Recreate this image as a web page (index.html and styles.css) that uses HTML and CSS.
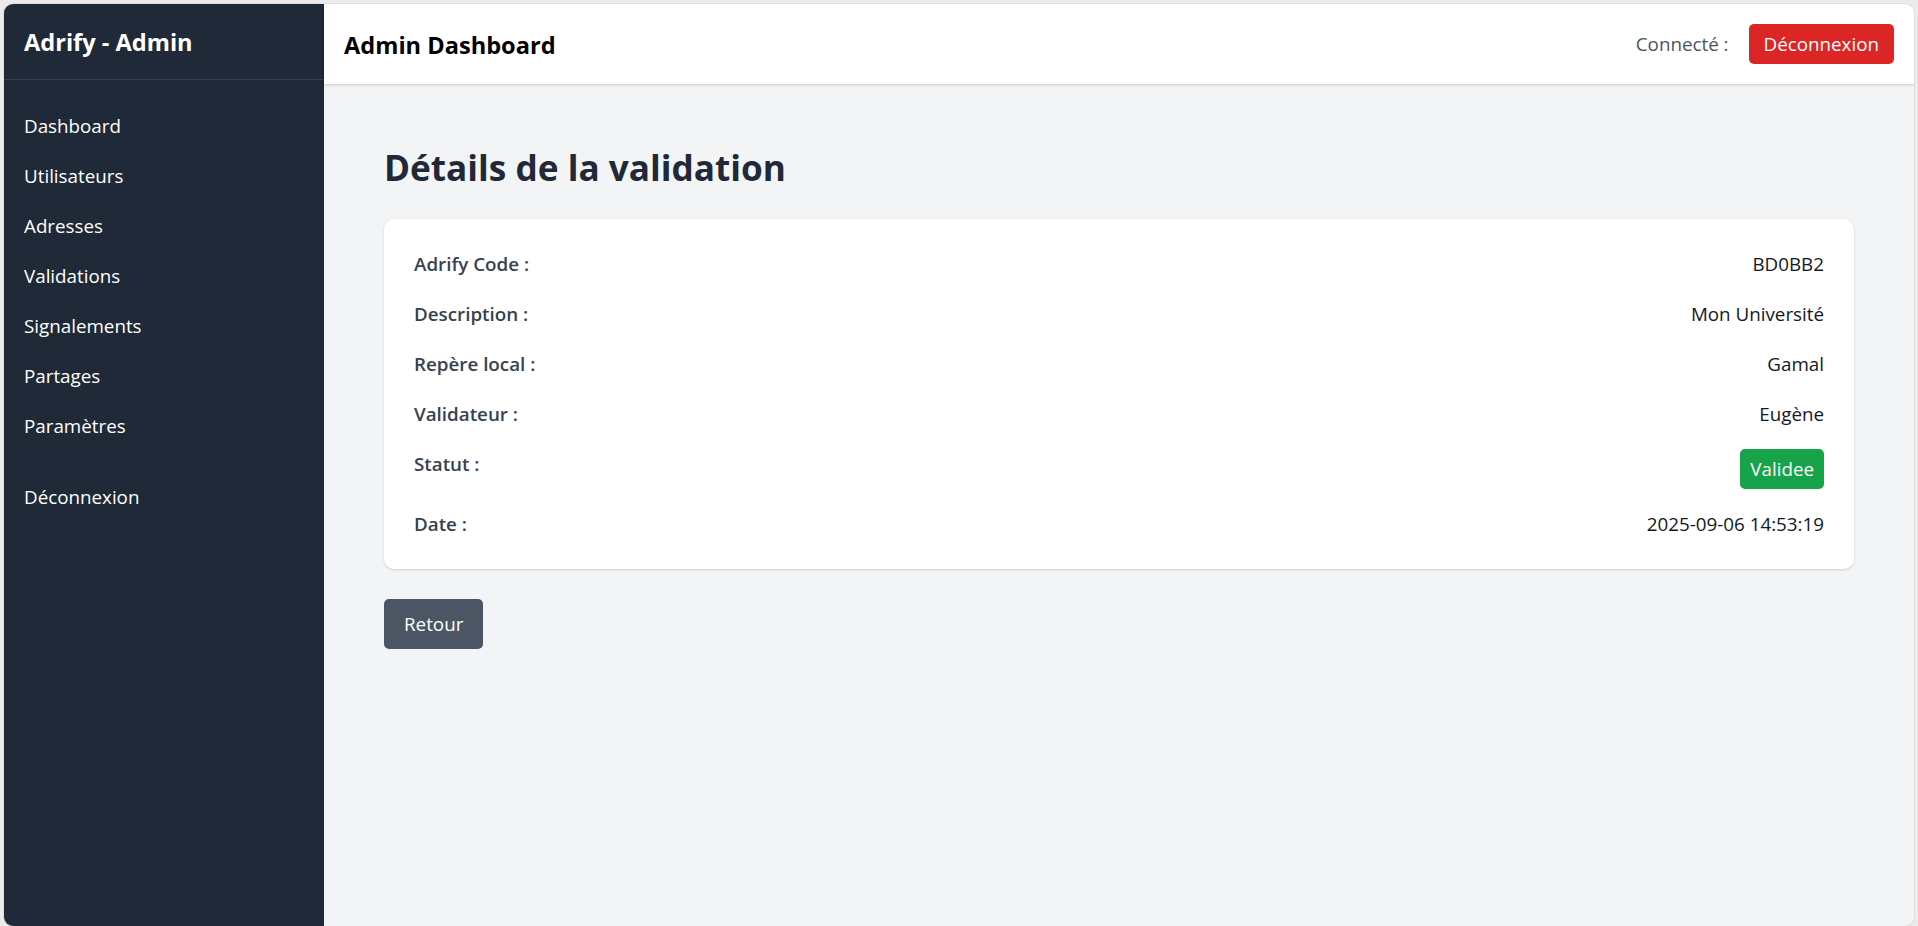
FILE: index.html
```html
<!DOCTYPE html>
<html lang="fr">
<head>
<meta charset="utf-8">
<title>Adrify - Admin</title>
<link rel="stylesheet" href="styles.css">
</head>
<body>
<div class="window">
  <aside class="sidebar">
    <div class="brand">Adrify - Admin</div>
    <nav class="nav">
      <a href="#">Dashboard</a>
      <a href="#">Utilisateurs</a>
      <a href="#">Adresses</a>
      <a href="#">Validations</a>
      <a href="#">Signalements</a>
      <a href="#">Partages</a>
      <a href="#">Paramètres</a>
      <a href="#" class="nav-logout">Déconnexion</a>
    </nav>
  </aside>
  <div class="main-col">
    <header class="topbar">
      <h1 class="topbar-title">Admin Dashboard</h1>
      <div class="user">
        <span class="user-label">Connecté :</span>
        <button class="btn-logout" type="button">Déconnexion</button>
      </div>
    </header>
    <main class="content">
      <h2 class="page-title">Détails de la validation</h2>
      <div class="card">
        <div class="row"><span class="label">Adrify Code :</span><span class="value">BD0BB2</span></div>
        <div class="row"><span class="label">Description :</span><span class="value">Mon Université</span></div>
        <div class="row"><span class="label">Repère local :</span><span class="value">Gamal</span></div>
        <div class="row"><span class="label">Validateur :</span><span class="value">Eugène</span></div>
        <div class="row"><span class="label">Statut :</span><span class="badge">Validee</span></div>
        <div class="row"><span class="label">Date :</span><span class="value">2025-09-06 14:53:19</span></div>
      </div>
      <a href="#" class="btn-back">Retour</a>
    </main>
  </div>
</div>
</body>
</html>
```

FILE: styles.css
```css
* { box-sizing: border-box; }
html, body { margin: 0; }
body {
  height: 926px;
  overflow: hidden;
  padding: 4px 4px 0 4px;
  background: #ececec;
  font-family: "Open Sans", "Noto Sans", "Liberation Sans", sans-serif;
  font-size: 18.8px;
  line-height: 30px;
}
.window {
  display: flex;
  height: 922px;
  border-radius: 9px;
  overflow: hidden;
  background: #f3f4f6;
  box-shadow: 0 0 0 1px #dedede;
}
.sidebar {
  width: 320px;
  flex-shrink: 0;
  background: #1f2937;
  color: #fff;
}
.brand {
  padding: 21px 20px 19px;
  font-size: 23.6px;
  line-height: 35px;
  font-weight: 700;
  border-bottom: 1px solid #374151;
}
.nav {
  display: flex;
  flex-direction: column;
  padding: 20px;
}
.nav a {
  color: #fff;
  text-decoration: none;
  padding: 11px 0 9px;
}
.nav .nav-logout { margin-top: 21px; }
.main-col {
  flex: 1;
  display: flex;
  flex-direction: column;
  min-width: 0;
}
.topbar {
  position: relative;
  height: 80px;
  flex-shrink: 0;
  background: #fff;
  display: flex;
  align-items: center;
  justify-content: space-between;
  padding: 0 20px;
  box-shadow: 0 1px 3px rgba(0,0,0,0.12), 0 1px 2px rgba(0,0,0,0.06);
}
.topbar-title {
  margin: 0;
  padding-top: 3px;
  font-size: 23.6px;
  line-height: 35px;
  font-weight: 700;
  color: #000;
}
.user {
  display: flex;
  align-items: center;
  gap: 20px;
}
.user-label { color: #4b5563; }
.btn-logout {
  font: inherit;
  border: 0;
  background: #dc2626;
  color: #fff;
  padding: 5px 15px;
  border-radius: 5px;
}
.content {
  padding: 60px;
}
.page-title {
  margin: 0 0 30px;
  padding-top: 1px;
  font-size: 35.2px;
  line-height: 44px;
  font-weight: 700;
  color: #1f2937;
}
.card {
  background: #fff;
  border-radius: 10px;
  box-shadow: 0 1px 3px rgba(0,0,0,0.1), 0 1px 2px rgba(0,0,0,0.06);
  padding: 30px;
  display: flex;
  flex-direction: column;
  gap: 20px;
}
.row {
  display: flex;
  justify-content: space-between;
  align-items: flex-start;
}
.label {
  font-weight: 600;
  color: #374151;
}
.value { color: #111827; }
.badge {
  background: #16a34a;
  color: #fff;
  padding: 5px 10px;
  border-radius: 5px;
}
.btn-back {
  display: inline-block;
  margin-top: 30px;
  background: #4b5563;
  color: #fff;
  text-decoration: none;
  padding: 10px 20px;
  border-radius: 5px;
}
```
